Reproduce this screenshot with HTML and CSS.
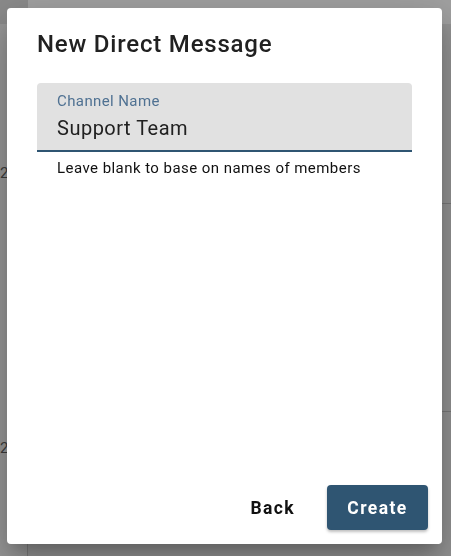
FILE: index.html
```html
<!DOCTYPE html>
<html lang="en">
<head>
    <title>New Direct Message</title>
    <link rel="stylesheet" href="styles.css">
</head>
<body>
<div class="page">
    <div class="page-head">
        <div class="head-corner"></div>
        <div class="head-bar"></div>
    </div>
    <div class="page-main">
        <div class="side">
            <div class="side-num first">2</div>
            <div class="side-num second">2</div>
        </div>
        <div class="list">
            <div class="list-row first"></div>
            <div class="list-row second"></div>
            <div class="list-row"></div>
        </div>
    </div>
</div>

<div class="dialog">
    <h2 class="dialog-title">New Direct Message</h2>
    <div class="dialog-body">
        <div class="field">
            <label class="field-label" for="channel">Channel Name</label>
            <input class="field-input" id="channel" type="text" value="Support Team">
        </div>
        <div class="field-help">Leave blank to base on names of members</div>
    </div>
    <div class="dialog-actions">
        <button class="btn btn-text" type="button">Back</button>
        <button class="btn btn-primary" type="button">Create</button>
    </div>
</div>
</body>
</html>
```

FILE: styles.css
```css
html {
    overflow: hidden;
}

body {
    margin: 0;
    padding: 0;
    width: 451px;
    height: 556px;
    background: #949494;
    font-family: Roboto, "Liberation Sans", sans-serif;
}

/* page behind the dialog */
.page {
    height: 100%;
    display: flex;
    flex-direction: column;
    overflow: hidden;
}

.page-head {
    display: flex;
    height: 24px;
    flex-shrink: 0;
}

.head-corner {
    width: 28px;
    background: #8b8b8b;
}

.head-bar {
    flex: 1;
    background: #a1a1a1;
}

.page-main {
    flex: 1;
    min-height: 0;
    display: flex;
    overflow: hidden;
}

.side {
    width: 27px;
    border-right: 1px solid #7d7d7d;
    background: #989898;
}

.side-num {
    font-size: 15px;
    line-height: 18px;
    color: #3c3c3c;
}

.side-num.first {
    margin-top: 140px;
}

.side-num.second {
    margin-top: 257px;
}

.list {
    flex: 1;
}

.list-row {
    height: 180px;
    border-bottom: 1px solid #7a7a7a;
}

.list-row.first {
    height: 179px;
}

.list-row.second {
    height: 207px;
}

/* dialog */
.dialog {
    position: fixed;
    top: 8px;
    left: 7px;
    width: 435px;
    height: 536px;
    box-sizing: border-box;
    background: #fff;
    border-radius: 4px;
    box-shadow: 0 11px 15px -7px rgba(0,0,0,0.2), 0 24px 38px 3px rgba(0,0,0,0.14), 0 9px 46px 8px rgba(0,0,0,0.12);
    display: flex;
    flex-direction: column;
}

.dialog-title {
    margin: 0;
    padding: 21px 30px 0;
    font-size: 24px;
    font-weight: 500;
    line-height: 30px;
    color: #212121;
    letter-spacing: 0.8px;
}

.dialog-body {
    flex: 1;
    padding: 24px 30px 0;
}

.field {
    background: #e1e1e1;
    border-radius: 4px 4px 0 0;
    border-bottom: 2px solid #2f5572;
    height: 67px;
}

.field-label {
    display: block;
    padding: 10px 20px 0;
    font-size: 15px;
    line-height: 16px;
    color: #4f7192;
    letter-spacing: 0.4px;
}

.field-input {
    display: block;
    width: 100%;
    box-sizing: border-box;
    border: 0;
    outline: 0;
    background: transparent;
    padding: 7px 20px 0;
    font-family: inherit;
    font-size: 20px;
    line-height: 24px;
    color: #212121;
    letter-spacing: 0.5px;
}

.field-help {
    padding: 7px 20px 0;
    font-size: 15px;
    line-height: 18px;
    color: #111;
    letter-spacing: 0.45px;
}

.dialog-actions {
    display: flex;
    justify-content: flex-end;
    align-items: center;
    gap: 24px;
    padding: 0 14px 14px;
}

.btn {
    border: 0;
    font-family: inherit;
    font-size: 17.5px;
    font-weight: 700;
    letter-spacing: 1.4px;
    border-radius: 4px;
    height: 45px;
    cursor: pointer;
}

.btn-text {
    background: transparent;
    color: #111;
    padding: 0 8px;
}

.btn-primary {
    background: #2f5572;
    color: #fff;
    width: 101px;
    box-shadow: 0 2px 3px rgba(0,0,0,0.25);
}
```
